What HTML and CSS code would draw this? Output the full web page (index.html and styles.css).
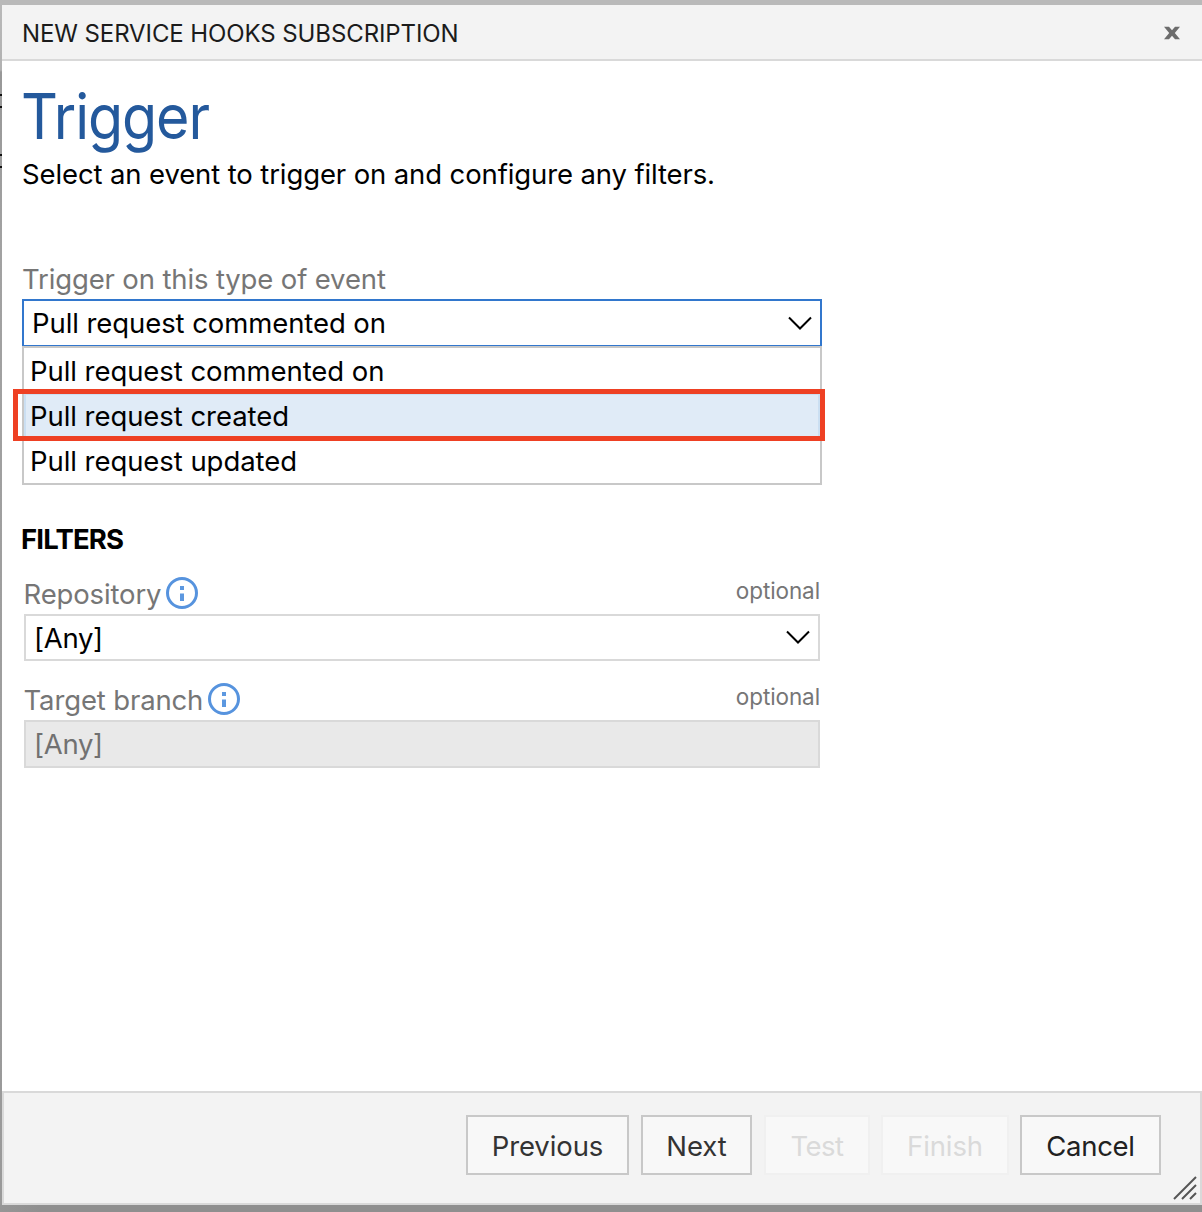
FILE: index.html
```html
<!DOCTYPE html>
<html lang="en">
<head>
<meta charset="utf-8">
<title>New Service Hooks Subscription</title>
<link rel="stylesheet" href="styles.css">
</head>
<body>
<div class="backdrop">
  <div class="edge-marks" aria-hidden="true"><i></i><i></i><i></i><i></i></div>
  <section class="dialog" role="dialog" aria-labelledby="dialog-title">
    <header class="titlebar">
      <h1 class="titlebar-text" id="dialog-title">NEW SERVICE HOOKS SUBSCRIPTION</h1>
      <button class="close" aria-label="Close">
        <svg width="18" height="14" viewBox="0 0 18 14"><path d="M1 .8h5L9 4.300 12 .8h5L11.800 7 17 13.200h-5L9 9.700l-3 3.500H1L6.200 7z"/></svg>
      </button>
    </header>
    <main class="content">
      <h2 class="heading">Trigger</h2>
      <p class="intro">Select an event to trigger on and configure any filters.</p>
      <div class="event">
        <label class="label">Trigger on this type of event</label>
        <div class="combo combo-open">
          <span>Pull request commented on</span>
          <svg class="chevron" width="26" height="16" viewBox="0 0 26 16"><path d="M2 2.500 13 13.500 24 2.500"/></svg>
        </div>
        <ul class="options">
          <li class="option">Pull request commented on</li>
          <li class="option option-selected">Pull request created<span class="highlight"></span></li>
          <li class="option">Pull request updated</li>
        </ul>
      </div>
      <h3 class="filters-title">FILTERS</h3>
      <div class="filter">
        <div class="filter-head">
          <label class="label">Repository</label>
          <svg class="info" width="32" height="32" viewBox="0 0 32 32"><circle cx="16" cy="16" r="14.500"/><path d="M14 9h4v4h-4zM14 16.500h4V24h-4z"/></svg>
          <span class="optional">optional</span>
        </div>
        <div class="combo">
          <span class="value">[Any]</span>
          <svg class="chevron" width="26" height="16" viewBox="0 0 26 16"><path d="M2 1.500 13 12.500 24 1.500"/></svg>
        </div>
      </div>
      <div class="filter">
        <div class="filter-head">
          <label class="label">Target branch</label>
          <svg class="info" width="32" height="32" viewBox="0 0 32 32"><circle cx="16" cy="16" r="14.500"/><path d="M14 9h4v4h-4zM14 16.500h4V24h-4z"/></svg>
          <span class="optional">optional</span>
        </div>
        <div class="combo combo-disabled"><span class="value">[Any]</span></div>
      </div>
    </main>
    <footer class="actions">
      <button class="btn btn-previous">Previous</button>
      <button class="btn btn-next">Next</button>
      <button class="btn btn-test" disabled>Test</button>
      <button class="btn btn-finish" disabled>Finish</button>
      <button class="btn btn-cancel">Cancel</button>
      <svg class="grip" width="24" height="24" viewBox="0 0 24 24"><path d="M1 23 23 1M9 23 23 9M17 23l6-6"/></svg>
    </footer>
  </section>
</div>
</body>
</html>
```

FILE: styles.css
```css
* { box-sizing: border-box; }
body {
  margin: 0;
  font-family: Inter, "Liberation Sans", sans-serif;
  font-size: 27.5px;
  letter-spacing: -0.1px;
  line-height: 34px;
  color: #000;
}
h1, h2, h3, p, ul { margin: 0; padding: 0; font-weight: 400; }
button { font: inherit; letter-spacing: inherit; }

.backdrop {
  position: relative;
  width: 1202px;
  height: 1212px;
  padding: 5px 0 7px 2px;
  overflow: hidden;
  background: linear-gradient(90deg, #969696, #8f8f8f 40px) 0 100% / 100% 7px no-repeat,
    linear-gradient(#b9b9b9, #b2b2b2 70px, #989898 72px, #a2a2a2 250px, #999);
}
.backdrop::before {
  content: "";
  position: absolute;
  inset: 0 0 auto;
  height: 5px;
  background: #b9b9b9;
}
.edge-marks i {
  position: absolute;
  left: 0;
  top: 94px;
  width: 2px;
  height: 2px;
  background: #111;
}
.edge-marks i:nth-child(2) { top: 106px; }
.edge-marks i:nth-child(3) { top: 154px; }
.edge-marks i:nth-child(4) { top: 166px; }

.dialog {
  position: relative;
  display: flex;
  flex-direction: column;
  height: 1200px;
  background: #fff;
}
.titlebar {
  display: flex;
  align-items: center;
  justify-content: space-between;
  height: 56px;
  padding: 2px 21px 0 20px;
  background: #f3f3f3;
  border-bottom: 2px solid #d9d9d9;
}
.titlebar-text { padding-top: 2px; font-size: 24px; letter-spacing: -0.1px; color: #1b1b1b; }
.close { display: flex; padding: 0; border: 0; background: none; }
.close svg { fill: #6c6c6c; }

.content { flex: 1; width: 820px; padding: 20px 0 0 20px; }
.heading {
  height: 76px;
  line-height: 71px;
  font-size: 63px;
  letter-spacing: -1.2px;
  text-indent: -1px;
  color: #24599c;
  transform: scaleX(0.91);
  transform-origin: 0 0;
}
.intro { letter-spacing: -0.12px; }
.event { margin-top: 71px; }
.label { display: block; letter-spacing: -0.14px; color: #767676; }
.event > .label { height: 37px; }
.combo {
  display: flex;
  align-items: center;
  justify-content: space-between;
  height: 47px;
  padding: 0 7px 0 8px;
  border: 2px solid #d9d9d9;
}
.combo-open { padding-left: 8px; letter-spacing: -0.08px; border-color: #3277cd; border-bottom-width: 1px; }
.chevron { fill: none; stroke: #000; stroke-width: 2; }
.value { letter-spacing: -0.3px; }
.options { height: 139px; letter-spacing: -0.06px; border: 2px solid #c8c8c8; list-style: none; }
.option { height: 45px; padding-left: 6px; line-height: 46px; }
.option-selected {
  position: relative;
  padding-left: 4px;
  line-height: 42px;
  background: #e0ebf7;
  border: 2px solid #cbdff2;
}
.highlight {
  position: absolute;
  inset: -6px -7px -5px -13px;
  border: 5px solid #ee4023;
}
.filters-title {
  margin: 37px 0 0 -1px;
  font-size: 27.5px;
  font-weight: 700;
  letter-spacing: -0.84px;
}
.filter { margin: 20px 2px 0; }
.filter-head {
  display: flex;
  align-items: center;
  gap: 5px;
  height: 38px;
  padding-bottom: 2px;
}
.filter-head .label { margin-left: -0.5px; }
.filter + .filter { margin-top: 21px; }
.info { margin-top: -2px; fill: #5c98e0; }
.info circle { fill: none; stroke: #5693de; stroke-width: 3; }
.optional { margin: -7px 0 0 auto; font-size: 22.5px; color: #767676; }
.combo-disabled { height: 48px; background: #e9e9e9; color: #717171; }

.actions {
  position: relative;
  display: flex;
  justify-content: flex-end;
  height: 114px;
  padding: 22px 39px 0 0;
  background: #f3f3f3;
  border: 2px solid #d9d9d9;
}
.btn {
  height: 60px;
  padding: 2px 0 0;
  background: #f8f8f8;
  border: 2px solid #c8c8c8;
  color: #333;
}
.btn:disabled { border-color: #f0f0f0; color: #dadada; }
.btn-previous { width: 163px; margin-right: 12px; }
.btn-next { width: 111px; margin-right: 12px; }
.btn-test { width: 106px; margin-right: 11px; letter-spacing: -0.5px; }
.btn-finish { width: 128px; margin-right: 11px; }
.btn-cancel { width: 141px; letter-spacing: -0.3px; color: #212121; }
.grip {
  position: absolute;
  right: 3px;
  bottom: 3px;
  fill: none;
  stroke: #555;
  stroke-width: 2;
}
```
